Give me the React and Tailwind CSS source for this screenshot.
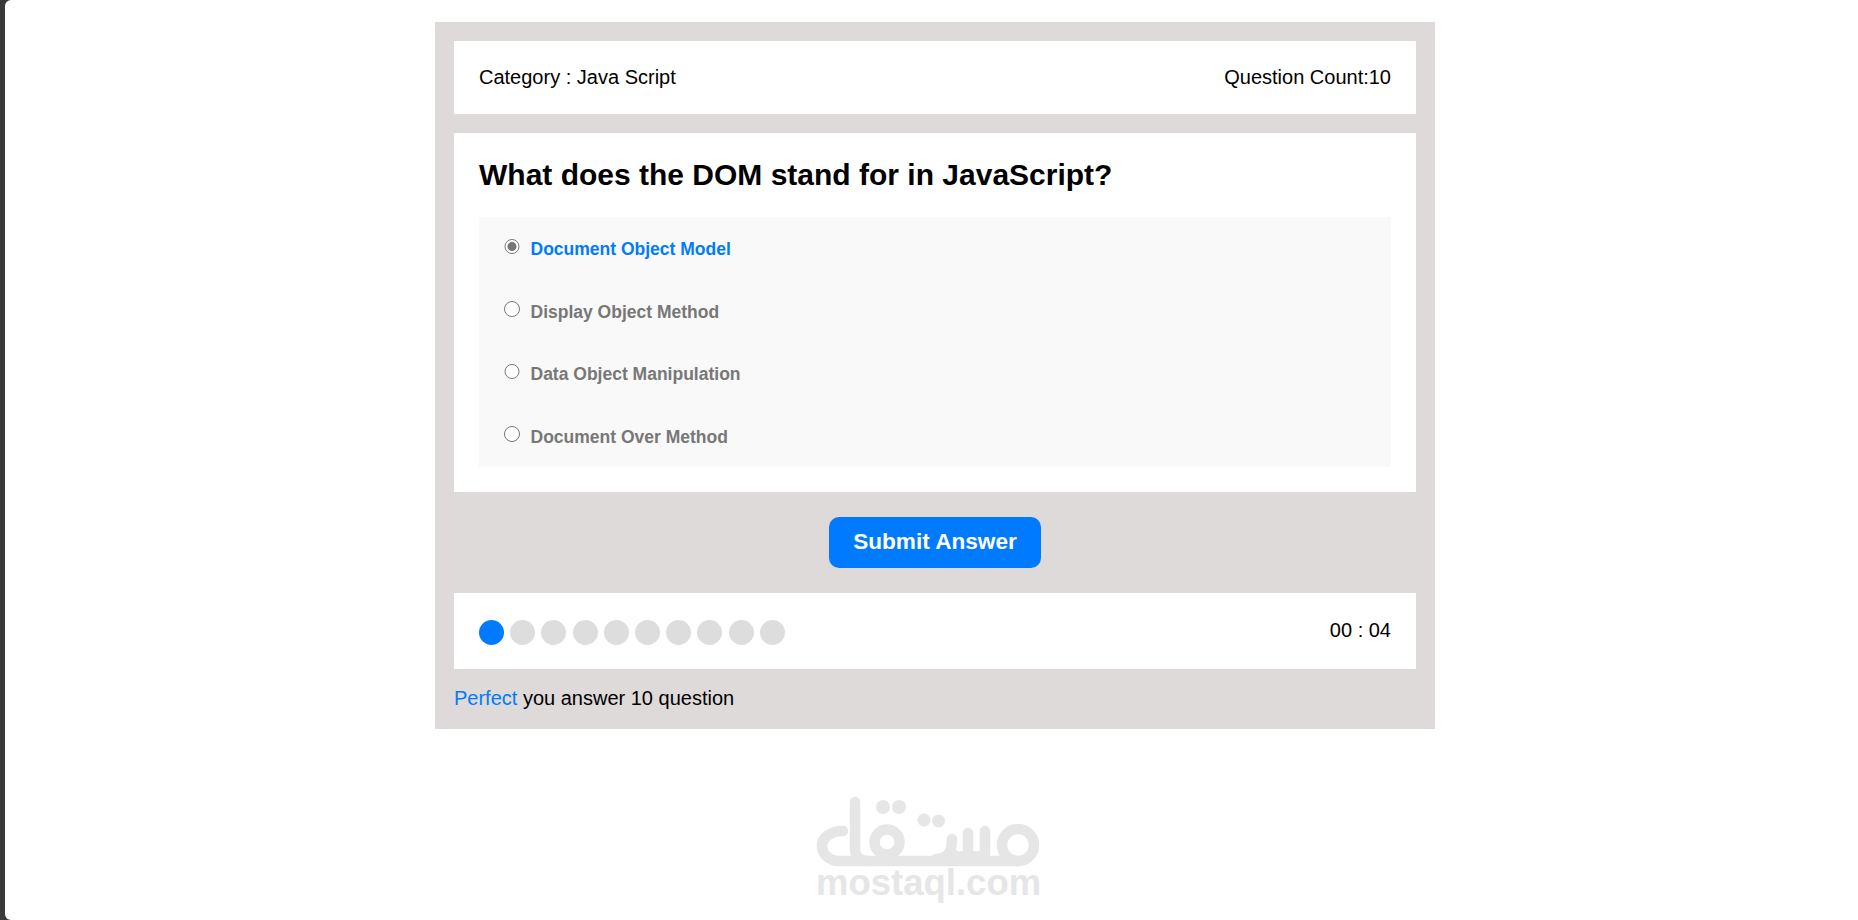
import React from 'react';

const options = ['Document Object Model', 'Display Object Method', 'Data Object Manipulation', 'Document Over Method'];

function Logo() {
  return (
    <svg width="240" height="75" viewBox="0 0 240 75" className="block" fill="none" stroke="#e6e6e6" strokeWidth="10.5" strokeLinecap="round" strokeLinejoin="round">
      <path d="M45 9 V55 Q45 68 58 68" />
      <path d="M33 38 C20 38 12 45 12 53 C12 62 20 68 30 68 H208" />
      <circle cx="77" cy="49" r="12.5" />
      <path d="M126 66 Q142 66 142 46 M142 60 Q146 66 158 62 V40 M158 60 Q162 66 175 62 V38" />
      <circle cx="208" cy="52" r="16" />
      <g fill="#e6e6e6" stroke="none">
        <circle cx="73" cy="14" r="7" />
        <circle cx="89" cy="14" r="7" />
        <circle cx="114" cy="27" r="6.5" />
        <circle cx="128.5" cy="28" r="6.5" />
      </g>
    </svg>
  );
}

export default function App() {
  return (
    <div className="h-screen overflow-hidden bg-[#3a3a3a] pl-[5px] font-['Liberation_Sans',Arial,sans-serif]">
      <div className="h-full bg-white rounded-l-[6px] pl-[430px] pt-[22px]">
        <div className="w-[1000px] bg-[#dedada] px-[19px] pt-[19px] pb-[19px]">
          {/* Header */}
          <div className="flex justify-between items-center h-[73px] pb-[2px] bg-white px-[25px] text-[20px] text-black">
            <span>Category : Java Script</span>
            <span>Question Count:10</span>
          </div>

          {/* Question */}
          <div className="mt-[19px] bg-white p-[25px]">
            <h2 className="text-[30px] leading-[34px] font-bold text-black">What does the DOM stand for in JavaScript?</h2>
            <div className="mt-[25px] bg-[#f9f9f9] px-[25px]">
              {options.map((opt, i) => (
                <label key={opt} className="flex items-center h-[62.5px] pt-[2px]">
                  <input type="radio" name="answer" defaultChecked={i === 0} className="w-[15.5px] h-[15.5px] m-0 mb-[6px] accent-[#767676]" />
                  <span className={`ml-[11px] text-[17.5px] font-bold ${i === 0 ? 'text-[#007bff]' : 'text-[#777777]'}`}>{opt}</span>
                </label>
              ))}
            </div>
          </div>

          {/* Submit */}
          <div className="flex justify-center mt-[25px]">
            <button className="w-[212px] h-[51px] pb-[2px] bg-[#007bff] text-white text-[22.6px] font-bold rounded-[10px]">Submit Answer</button>
          </div>

          {/* Progress */}
          <div className="mt-[25px] flex justify-between items-center h-[76px] bg-white px-[25px]">
            <div className="flex gap-[6.2px] mt-[2px]">
              {Array.from({ length: 10 }).map((_, i) => (
                <span key={i} className={`w-[25px] h-[25px] rounded-full ${i === 0 ? 'bg-[#007bff]' : 'bg-[#dddddd]'}`} />
              ))}
            </div>
            <span className="text-[20px] text-black mb-[2px]">00 : 04</span>
          </div>

          <p className="mt-[18px] text-[20px] leading-[23px] text-black"><span className="text-[#007bff]">Perfect</span> you answer 10 question</p>
        </div>

        {/* Watermark */}
        <div className="w-[240px] ml-[375px] mt-[64px]">
          <Logo />
          <div className="pl-[6px] text-[36.5px] leading-[30px] font-bold text-[#e6e6e6]">mostaql.com</div>
        </div>
      </div>
    </div>
  );
}
